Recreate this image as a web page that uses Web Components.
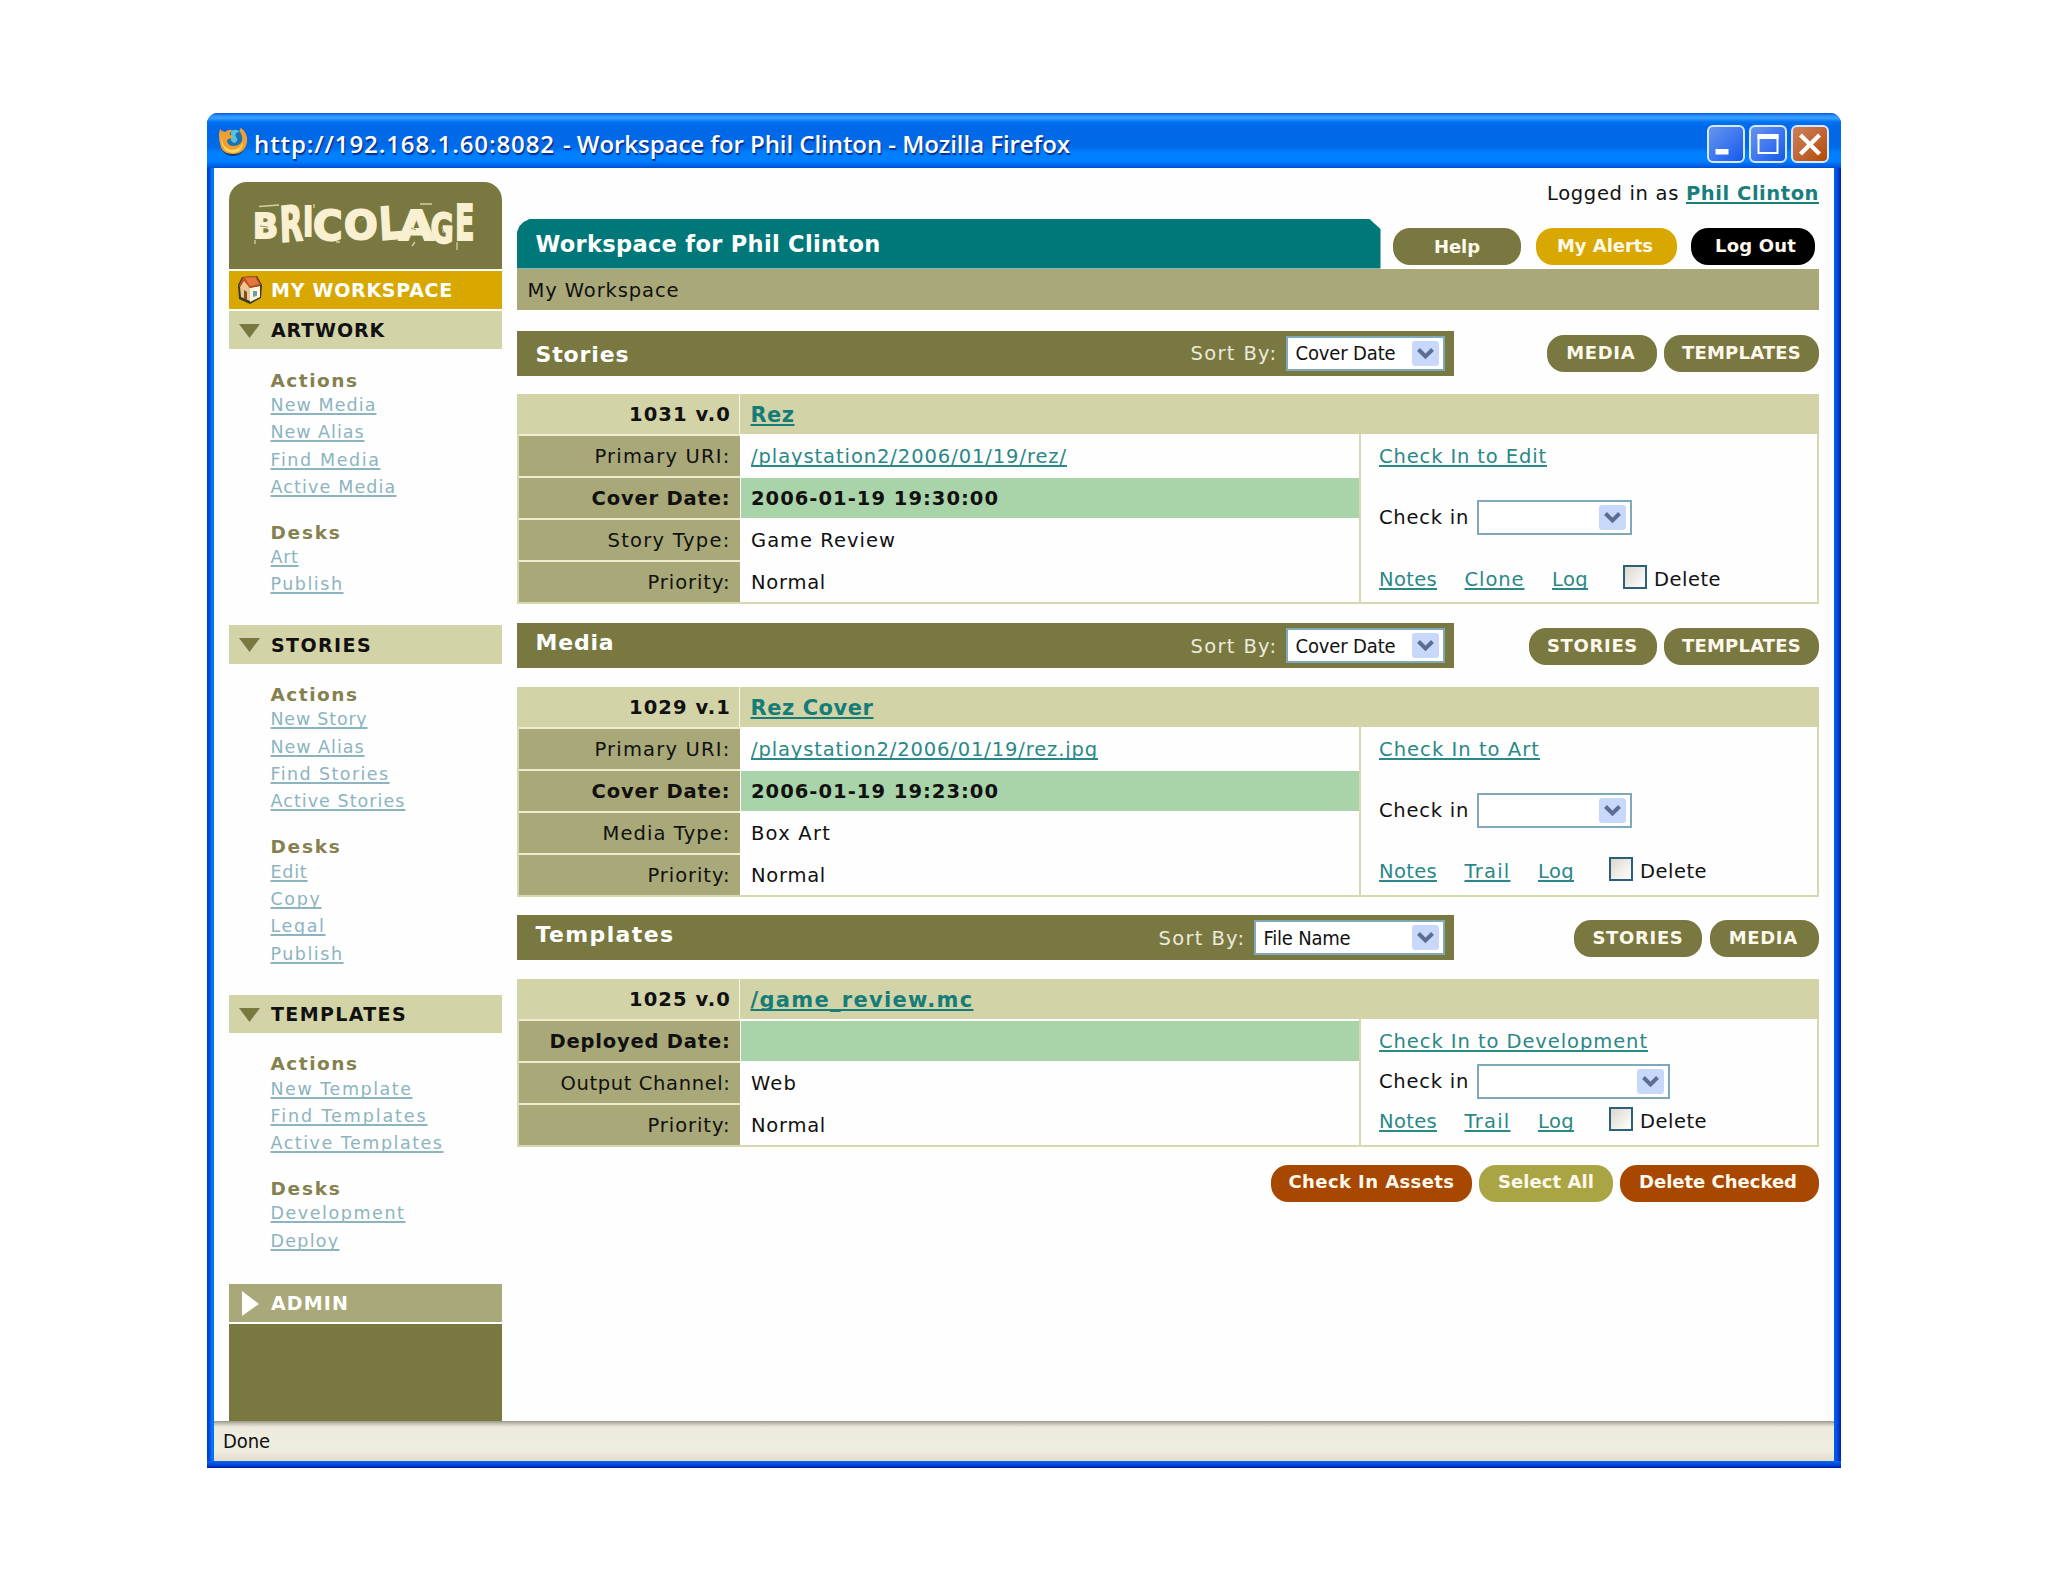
<!DOCTYPE html>
<html lang="en">
<head>
<meta charset="utf-8">
<title>Workspace for Phil Clinton</title>
<style>
  body {
    margin: 0;
    background: #fff;
    color: #111;
    font-family: "DejaVu Sans", Verdana, sans-serif;
    font-size: 19.500px;
  }
</style>
</head>
<body>
<xp-window>
  <bric-sidebar slot="side"></bric-sidebar>
  <bric-workspace></bric-workspace>
</xp-window>

<script>
class XpWindow extends HTMLElement {
  connectedCallback() {
    this.attachShadow({ mode: 'open' });
    this.shadowRoot.innerHTML = `
      <style>
        :host {
          display: flex;
          flex-direction: column;
          box-sizing: border-box;
          width: 1634px;
          height: 1355px;
          margin: 113px 0 0 207px;
          border-radius: 11px 11px 0 0;
          background: linear-gradient(90deg, #0038c8 0, #0050e0 3px, #0080fc 5px, #0068ec 7px, #0060e8 calc(100% - 7px), #0050e0 calc(100% - 4px), #0020a8 100%);
        }
        .title {
          display: flex;
          align-items: center;
          box-sizing: border-box;
          flex: none;
          height: 55px;
          padding: 4px 11px 0 10px;
          border-radius: 11px 11px 0 0;
          background: linear-gradient(#0058e0 0, #2f92ff 3px, #38a0ff 5px, #0072f0 9px, #0068e8 14px, #006ae8 34px, #0080ff 40px, #0080ff 48px, #0058e0 54px, #0048c8 55px);
          color: #fff;
          font: 600 24px "Open Sans", "Trebuchet MS", sans-serif;
          text-shadow: 1px 2px 1px #0a2a8c;
        }
        .title > svg:first-child { margin: -3px 6px 0 0; }
        .title fit-text { padding-top: 2px; }
        .title fit-text + fit-text { margin-left: 8px; }
        fit-text { flex: none; }
        .buttons { display: flex; gap: 4px; margin: 2px 1px 0 auto; }
        .body {
          display: flex;
          gap: 14.500px;
          flex: 1;
          min-height: 0;
          margin: 0 7px;
          padding: 14px 15px 0 14.500px;
          background: #fefefe;
        }
        .main { flex: 1; margin-top: -14px; }
        .status {
          box-sizing: border-box;
          flex: none;
          height: 40px;
          margin: 0 7px 7px;
          padding-left: 9px;
          background: linear-gradient(#98968a 0, #c8c6b8 3px, #edeade 6px, #efece0 30px, #e4ddc8 40px);
          font: 20px/41px "DejaVu Sans Condensed", "DejaVu Sans", sans-serif;
          font-stretch: condensed;
        }
        .bottom { flex: none; height: 7px; margin-top: -7px; background: linear-gradient(#0068f0, #0048d8 4px, #0018a0); }
      </style>
      <div class="title">
        <svg width="31" height="31" viewBox="0 0 31 31">
          <circle cx="16" cy="17" r="13" fill="#1a3870"/>
          <circle cx="16" cy="15" r="11" fill="#1c72b8"/>
          <path d="M14 5q6-3 9 1-6 0-4 5 3 3-1 6-5-1-4-5 0-4 0-7z" fill="#5cc0d8"/>
          <path d="M3 3q2 3 5 3 4-3 7-2-3 3-2 5 3 1 2 3-5 1-5 3 1 5 6 5 7 0 9-5 1-5-2-9-1-3 1-4 7 5 6 14-2 12-14 12Q4 28 3 17 1 10 3 3z" fill="#f0a030"/>
          <path d="M4 10q1 12 10 14 9 0 12-8 0 10-10 11Q4 26 4 10z" fill="#ffd860"/>
        </svg>
        <fit-text w="301">http://192.168.1.60:8082</fit-text>
        <fit-text w="507">- Workspace for Phil Clinton - Mozilla Firefox</fit-text>
        <div class="buttons">
          <xp-button kind="min"></xp-button><xp-button kind="max"></xp-button><xp-button kind="close"></xp-button>
        </div>
      </div>
      <div class="body">
        <slot name="side"></slot>
        <div class="main"><slot></slot></div>
      </div>
      <div class="status"><fit-text w="47">Done</fit-text></div>
      <div class="bottom"></div>
    `;
  }
}

class XpButton extends HTMLElement {
  connectedCallback() {
    const icons = {
      min: '<path d="M8.500 24h13v5.500h-13z" fill="#fff"/>',
      max: '<path d="M9.500 10.500h19v17.500h-19z" fill="none" stroke="#fff" stroke-width="2"/><path d="M8.500 9h21v5h-21z" fill="#fff"/>',
      close: '<path d="M9.500 10l19 19M28.500 10l-19 19" stroke="#fff" stroke-width="4.200"/>'
    };
    const kind = this.getAttribute('kind');
    const [a, b, c] = kind == 'close' ? ['#d08058', '#c06838', '#b04800'] : ['#6898e8', '#4078f0', '#1058e8'];
    this.attachShadow({ mode: 'open' });
    this.shadowRoot.innerHTML = `
      <style>
        :host { display: block; height: 38px; }
        svg { display: block; }
      </style>
      <svg width="38" height="38" viewBox="0 0 38 38">
        <linearGradient id="g" x1="0" y1="0" x2="1" y2="1">
          <stop offset="0" stop-color="${a}"/><stop offset=".5" stop-color="${b}"/><stop offset="1" stop-color="${c}"/>
        </linearGradient>
        <rect x="1" y="1" width="36" height="36" rx="5" fill="url(#g)" stroke="#d8e8ff" stroke-width="2"/>
        ${icons[kind]}
      </svg>
    `;
  }
}

class XpSelect extends HTMLElement {
  connectedCallback() {
    this.attachShadow({ mode: 'open' });
    this.shadowRoot.innerHTML = `
      <style>
        :host {
          display: flex;
          align-items: center;
          justify-content: space-between;
          box-sizing: border-box;
          height: 35px;
          padding: 0 4px 0 8px;
          border: 2px solid #7fa8b8;
          background: #fff;
          color: #111;
          font: 20px "DejaVu Sans Condensed", "DejaVu Sans", sans-serif;
          font-stretch: condensed;
        }
        svg { flex: none; margin-left: auto; }
      </style>
      <slot></slot>
      <svg width="27" height="25" viewBox="0 0 27 25">
        <rect width="27" height="25" rx="3" fill="#c8d8fa"/>
        <path d="M6.500 8.500l7 7 7-7" fill="none" stroke="#5c6c94" stroke-width="4"/>
      </svg>
    `;
  }
}

class BricLogo extends HTMLElement {
  connectedCallback() {
    // letter, left, width, top, height, tilt
    const letters = [
      ['B', 26, 22, 31, 26, 0], ['R', 52, 20, 24, 37, -3], ['I', 75, 9, 24, 31, 0],
      ['C', 87, 26, 28, 31, 0], ['O', 118, 30, 28, 30, 0], ['L', 151, 20, 26, 34, -4],
      ['A', 173, 31, 28, 31, 0], ['G', 204, 20, 30, 31, 2], ['E', 228, 17, 21, 38, 0]
    ];
    this.attachShadow({ mode: 'open' });
    this.shadowRoot.innerHTML = `
      <style>
        :host {
          display: block;
          position: relative;
          flex: none;
          height: 86.500px;
          border-radius: 18px 18px 0 0;
          background: #787840;
          color: #f8f0d0;
          font-weight: bold;
          line-height: 1;
          -webkit-text-stroke: 2px #f8f0d0;
        }
        span { position: absolute; transform-origin: 0 0; }
        svg { position: absolute; inset: 0; }
      </style>${letters.map(l => `<span>${l[0]}</span>`).join('')}<svg width="274" height="86">
        <path d="M30 24.500l20-1.500M191 22h12M85 22v4M26 58v4M107 60h4M186 60l-3 4M228 60v8" stroke="#d8d0a0" stroke-width="1.300" fill="none"/>
        <path d="M31 44l8 1M130 40l5-4M60 30l4 3M182 46l5 2M212 45l3 5" stroke="#9a965e" stroke-width="1"/>
      </svg>
    `;
    this.shadowRoot.querySelectorAll('span').forEach((s, i) => {
      const [, x, w, y, h, tilt] = letters[i];
      const fs = h / 0.76;
      s.style.fontSize = fs + 'px';
      const k = w / (s.offsetWidth * 0.88);
      s.style.left = x - s.offsetWidth * k * 0.07 + 'px';
      s.style.top = y - fs * 0.11 + 'px';
      s.style.transform = `scaleX(${k}) rotate(${tilt}deg)`;
    });
  }
}

class SideBar extends HTMLElement {
  connectedCallback() {
    this.attachShadow({ mode: 'open' });
    this.shadowRoot.innerHTML = `
      <style>
        :host { display: flex; flex-direction: column; width: 273.500px; flex: none; }
        .foot { flex: 1; background: #787840; }
      </style>
      <bric-logo></bric-logo>
      <side-head kind="home" w="182">MY WORKSPACE</side-head>
      <side-head kind="open" w="114">ARTWORK</side-head>
      <side-links>
        <b data-w="88">Actions</b>
        <a data-w="106">New Media</a><a data-w="94">New Alias</a><a data-w="110">Find Media</a><a data-w="126">Active Media</a>
        <b data-w="71">Desks</b>
        <a data-w="28">Art</a><a data-w="73">Publish</a>
      </side-links>
      <side-head kind="open" w="101">STORIES</side-head>
      <side-links>
        <b data-w="88">Actions</b>
        <a data-w="97">New Story</a><a data-w="94">New Alias</a><a data-w="119">Find Stories</a><a data-w="135">Active Stories</a>
        <b data-w="71">Desks</b>
        <a data-w="37">Edit</a><a data-w="51">Copy</a><a data-w="55">Legal</a><a data-w="73">Publish</a>
      </side-links>
      <side-head kind="open" w="136">TEMPLATES</side-head>
      <side-links>
        <b data-w="88">Actions</b>
        <a data-w="142">New Template</a><a data-w="157">Find Templates</a><a data-w="173">Active Templates</a>
        <b data-w="71">Desks</b>
        <a data-w="135">Development</a><a data-w="69">Deploy</a>
      </side-links>
      <side-head kind="closed" w="78">ADMIN</side-head>
      <div class="foot"></div>
    `;
  }
}

class SideHead extends HTMLElement {
  connectedCallback() {
    const icons = {
      home: `<svg width="26" height="30" viewBox="0 0 26 30">
          <path d="M1 10L5 2l15-1 5 9-1 13-11 6-11-5z" fill="#3c3828"/>
          <path d="M3 12l4-7 6 8v13l-9-4z" fill="#e8c890"/>
          <path d="M13 13l10-2v11l-10 5z" fill="#fff4dc"/>
          <path d="M2 11L6 2l13-1 5 9-11 3-6-7-4 6z" fill="#c85020"/>
          <path d="M8 3l10-1 4 7-9 2z" fill="#e07840"/>
          <path d="M7 15l3 2v8l-3-1z" fill="#7a5030"/>
          <path d="M16 16h4v5l-4 1z" fill="#68a0a8"/>
        </svg>`,
      open: '<svg width="26" height="18"><path d="M2 3h21L12.500 17z" fill="#787840"/></svg>',
      closed: '<svg width="26" height="28"><path d="M5 2l17 13L5 27z" fill="#fff"/></svg>'
    };
    const kind = this.getAttribute('kind');
    const bg = { home: '#d8a800', open: '#d3d3a8', closed: '#a8a878' }[kind];
    this.attachShadow({ mode: 'open' });
    this.shadowRoot.innerHTML = `
      <style>
        :host {
          display: flex;
          align-items: center;
          gap: 8.500px;
          flex: none;
          box-sizing: border-box;
          height: 38.300px;
          padding-left: 8px;
          margin: 2px 0;
          background: ${bg};
          color: ${kind == 'open' ? '#111' : '#fff'};
          font-size: 19px;
          font-weight: bold;
        }
        :host([kind=open]) { margin: 0; }
        svg { flex: none; }
        fit-text { padding-top: 1px; }
      </style>
      ${icons[kind]}<fit-text w="${this.getAttribute('w')}"><slot></slot></fit-text>
    `;
  }
}

class SideLinks extends HTMLElement {
  connectedCallback() {
    this.attachShadow({ mode: 'open' });
    this.shadowRoot.innerHTML = `
      <style>
        :host { display: flex; flex-direction: column; align-items: flex-start; flex: none; padding: 0 0 26.500px 42px; }
        b { height: 22.200px; margin-top: 20.500px; font-size: 18.500px; line-height: 21.800px; color: #84814f; }
        a {
          height: 27.400px;
          font-size: 17.500px;
          line-height: 27.400px;
          color: #8cb4be;
        }
      </style>
      ${[...this.children].map(el => `<${el.localName}><fit-text w="${el.dataset.w}" ${el.localName == 'a' ? 'link' : ''}>${el.textContent}</fit-text></${el.localName}>`).join('')}
    `;
  }
}

class PillButton extends HTMLElement {
  connectedCallback() {
    this.attachShadow({ mode: 'open' });
    this.shadowRoot.innerHTML = `
      <style>
        :host {
          display: flex;
          justify-content: center;
          flex: none;
          box-sizing: border-box;
          height: 37px;
          border-radius: 17px;
          background: var(--pill, #787840);
          color: #fff8ec;
          font-size: 18px;
          font-weight: bold;
          line-height: 35px;
        }
      </style>
      <fit-text w="${this.getAttribute('w')}"><slot></slot></fit-text>
    `;
  }
}

class AssetSection extends HTMLElement {
  connectedCallback() {
    this.attachShadow({ mode: 'open' });
    this.shadowRoot.innerHTML = `
      <style>
        :host { display: block; margin-bottom: 18.400px; }
        .top { display: flex; align-items: center; justify-content: space-between; height: 45.300px; margin-bottom: 18.500px; }
        .bar {
          display: flex;
          align-items: center;
          box-sizing: border-box;
          width: 937px;
          height: 100%;
          padding: 0 9px 0 19px;
          background: #787840;
          color: #fff;
        }
        h2 { margin: 0 auto ${this.getAttribute('drop') || 6}px 0; font-size: 22px; line-height: 28px; }
        .bar > fit-text { margin-right: 8px; padding-top: 1px; color: #eceadc; }
        .pills { display: flex; gap: 7.500px; margin-top: 1px; }
        .card { display: grid; grid-template-columns: 1fr 458.500px; border: solid #d8d8b0; border-width: 0 2px 2px; }
      </style>
      <div class="top">
        <div class="bar">
          <h2><fit-text w="${this.getAttribute('w')}">${this.getAttribute('label')}</fit-text></h2>
          <fit-text w="87">Sort By:</fit-text>
          <slot name="sort"></slot>
        </div>
        <div class="pills"><slot name="pill"></slot></div>
      </div>
      <div class="card"><slot></slot></div>
    `;
  }
}

class AssetHead extends HTMLElement {
  connectedCallback() {
    this.attachShadow({ mode: 'open' });
    this.shadowRoot.innerHTML = `
      <style>
        :host { display: flex; grid-column: 1 / 3; height: 40px; margin: 0 -2px; background: #d3d3a8; font-weight: bold; line-height: 42px; }
        .id { box-sizing: border-box; width: 223.500px; padding-right: 8px; text-align: right; border-right: 1.500px solid #f8f6e4; }
        .name { padding-left: 10.500px; font-size: 21px; color: #167c78; }
      </style>
      <div class="id"><fit-text w="102">${this.getAttribute('ref')}</fit-text></div>
      <div class="name"><fit-text link w="${this.getAttribute('w')}"><slot></slot></fit-text></div>
    `;
  }
}

class AssetRow extends HTMLElement {
  connectedCallback() {
    const link = this.hasAttribute('link');
    this.attachShadow({ mode: 'open' });
    this.shadowRoot.innerHTML = `
      <style>
        :host { display: flex; height: 42px; line-height: 42px; background: #fefefe; }
        :host([mark]) { font-weight: bold; }
        :host([mark]) .value { background: #a9d4aa; }
        .label { box-sizing: border-box; width: 221px; padding-right: 9px; text-align: right; background: #a8a878; }
        .value { flex: 1; padding-left: 10px; margin-left: 1.500px; color: ${link ? '#2a8886' : 'inherit'}; }
        .label, .value { height: 40px; margin-top: 2px; }
        .label { box-shadow: 0 -2px #f0ecd0; }
      </style>
      <div class="label"><fit-text w="${this.getAttribute('lw')}">${this.getAttribute('label')}</fit-text></div>
      <div class="value">${this.textContent ? `<fit-text w="${this.getAttribute('w')}" ${link ? 'link' : ''}><slot></slot></fit-text>` : ''}</div>
    `;
  }
}

class AssetActions extends HTMLElement {
  connectedCallback() {
    const at = name => this.getAttribute(name);
    this.attachShadow({ mode: 'open' });
    this.shadowRoot.innerHTML = `
      <style>
        :host {
          display: grid;
          grid-template-rows: 45px minmax(0, 1fr) 46px;
          grid-column: 2;
          grid-row: 2 / span ${at('rows')};
          box-sizing: border-box;
          height: ${at('rows') * 42}px;
          border-left: 2px solid #d8d8b0;
          padding-left: 18.500px;
          background: #fefefe;
        }
        div { display: flex; align-items: center; }
        [link] { color: #2a8886; }
        xp-select { width: ${at('select')}px; margin-left: 8px; }
        .links [link] + [link] { margin-left: 27.500px; }
        i {
          box-sizing: border-box;
          width: 24px;
          height: 24px;
          margin: -5px 7px 0 35px;
          border: 2px solid #2c6078;
          background: linear-gradient(135deg, #dcd8cc, #fff);
        }
      </style>
      <div><fit-text link w="${at('w')}">${at('target')}</fit-text></div>
      <div><fit-text w="90">Check in</fit-text><xp-select></xp-select></div>
      <div class="links">
        <fit-text link w="58">Notes</fit-text>
        <fit-text link w="${at('mw')}">${at('middle')}</fit-text>
        <fit-text link w="36">Log</fit-text>
        <i></i><fit-text w="67">Delete</fit-text>
      </div>
    `;
  }
}

class BricWorkspace extends HTMLElement {
  connectedCallback() {
    this.attachShadow({ mode: 'open' });
    this.shadowRoot.innerHTML = `
      <style>
        :host { display: block; }
        .user { display: flex; justify-content: flex-end; gap: 7px; height: 51px; line-height: 51px; }
        .user [link] { color: #187e7c; font-weight: bold; }
        header { display: flex; align-items: flex-start; height: 49.500px; }
        h1 {
          box-sizing: border-box;
          width: 864px;
          height: 100%;
          margin: 0 12.500px 0 0;
          padding-left: 19px;
          background: #00787a;
          clip-path: polygon(0 14px, 3px 7px, 7px 3px, 13px 0, 853px 0, 864px 10px, 864px 100%, 0 100%);
          color: #fff;
          font-size: 22.500px;
          line-height: 50px;
        }
        header pill-button { margin-top: 9px; }
        .crumb { height: 41.800px; margin-bottom: 20.400px; padding-left: 11px; background: #a8a878; line-height: 43px; }
        .foot { display: flex; justify-content: flex-end; gap: 7px; }
        .foot pill-button { line-height: 34px; }
      </style>
      <div class="user"><fit-text w="132">Logged in as</fit-text><fit-text link w="133">Phil Clinton</fit-text></div>
      <header>
        <h1><fit-text w="345">Workspace for Phil Clinton</fit-text></h1>
        <pill-button w="46" style="width:128px;line-height:38px">Help</pill-button>
        <pill-button w="96" style="width:141px;margin-left:15px;padding-right:3px;--pill:#d8a800">My Alerts</pill-button>
        <pill-button w="81" style="width:124px;margin-left:14px;padding-left:5px;--pill:#000">Log Out</pill-button>
      </header>
      <div class="crumb"><fit-text w="152">My Workspace</fit-text></div>

      <asset-section label="Stories" w="94" drop="-3">
        <xp-select slot="sort" style="width:159px"><fit-text w="100">Cover Date</fit-text></xp-select>
        <pill-button slot="pill" w="69" style="width:109.500px;padding-right:2px">MEDIA</pill-button>
        <pill-button slot="pill" w="119" style="width:155px">TEMPLATES</pill-button>
        <asset-head ref="1031 v.0" w="44">Rez</asset-head>
        <asset-row label="Primary URI:" lw="136" w="316" link>/playstation2/2006/01/19/rez/</asset-row>
        <asset-row label="Cover Date:" lw="139" w="248" mark>2006-01-19 19:30:00</asset-row>
        <asset-row label="Story Type:" lw="123" w="145">Game Review</asset-row>
        <asset-row label="Priority:" lw="83" w="75">Normal</asset-row>
        <asset-actions rows="4" target="Check In to Edit" w="168" select="155" middle="Clone" mw="60"></asset-actions>
      </asset-section>

      <asset-section label="Media" w="79">
        <xp-select slot="sort" style="width:159px"><fit-text w="100">Cover Date</fit-text></xp-select>
        <pill-button slot="pill" w="91" style="width:128px">STORIES</pill-button>
        <pill-button slot="pill" w="119" style="width:155px">TEMPLATES</pill-button>
        <asset-head ref="1029 v.1" w="123">Rez Cover</asset-head>
        <asset-row label="Primary URI:" lw="136" w="347" link>/playstation2/2006/01/19/rez.jpg</asset-row>
        <asset-row label="Cover Date:" lw="139" w="248" mark>2006-01-19 19:23:00</asset-row>
        <asset-row label="Media Type:" lw="128" w="80">Box Art</asset-row>
        <asset-row label="Priority:" lw="83" w="75">Normal</asset-row>
        <asset-actions rows="4" target="Check In to Art" w="161" select="155" middle="Trail" mw="46"></asset-actions>
      </asset-section>

      <asset-section label="Templates" w="139">
        <xp-select slot="sort" style="width:191px"><fit-text w="87">File Name</fit-text></xp-select>
        <pill-button slot="pill" w="91" style="width:128px">STORIES</pill-button>
        <pill-button slot="pill" w="69" style="width:109.500px;padding-right:2px">MEDIA</pill-button>
        <asset-head ref="1025 v.0" w="223">/game_review.mc</asset-head>
        <asset-row label="Deployed Date:" lw="181" mark></asset-row>
        <asset-row label="Output Channel:" lw="170" w="46">Web</asset-row>
        <asset-row label="Priority:" lw="83" w="75">Normal</asset-row>
        <asset-actions rows="3" target="Check In to Development" w="269" select="193" middle="Trail" mw="46"></asset-actions>
      </asset-section>

      <div class="foot">
        <pill-button w="166" style="width:201px;--pill:#a84800">Check In Assets</pill-button>
        <pill-button w="96" style="width:134px;--pill:#aaa544">Select All</pill-button>
        <pill-button w="158" style="width:199px;padding-right:3px;--pill:#a84800">Delete Checked</pill-button>
      </div>
    `;
  }
}

// one line of text, tracked out or in to a given width
class FitText extends HTMLElement {
  connectedCallback() {
    this.attachShadow({ mode: 'open' });
    this.shadowRoot.innerHTML = `<style>
        :host { display: inline-block; white-space: nowrap; }
        :host([link]) span {
          text-decoration: underline;
          text-decoration-thickness: 2px;
          text-decoration-skip-ink: none;
          text-underline-offset: 2px;
        }
      </style><span><slot></slot></span>`;
    const span = this.shadowRoot.querySelector('span');
    const slot = this.querySelector('slot');
    const text = slot ? slot.assignedNodes().map(n => n.textContent).join('') : this.textContent;
    const w = +this.getAttribute('w');
    if (!w || !text.length) return;
    span.style.letterSpacing = (w - span.getBoundingClientRect().width) / text.length + 'px';
  }
}

customElements.define('bric-workspace', BricWorkspace);
customElements.define('bric-sidebar', SideBar);
customElements.define('xp-window', XpWindow);
customElements.define('xp-button', XpButton);
customElements.define('asset-section', AssetSection);
customElements.define('asset-head', AssetHead);
customElements.define('asset-row', AssetRow);
customElements.define('asset-actions', AssetActions);
customElements.define('xp-select', XpSelect);
customElements.define('bric-logo', BricLogo);
customElements.define('side-head', SideHead);
customElements.define('side-links', SideLinks);
customElements.define('pill-button', PillButton);
customElements.define('fit-text', FitText);
</script>
</body>
</html>
